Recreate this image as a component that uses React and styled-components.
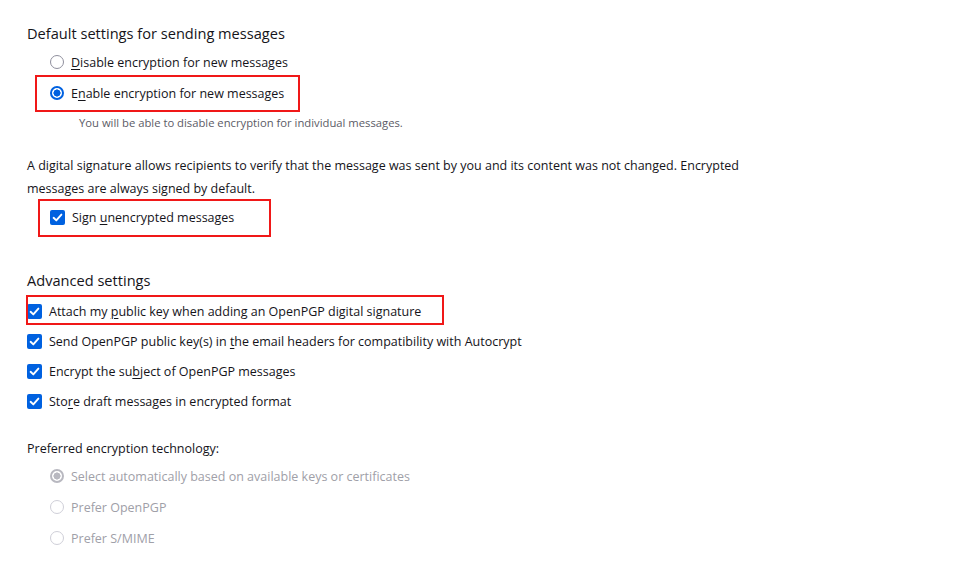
import React from "react";
import styled, { createGlobalStyle, css } from "styled-components";

const FS = "12.5px";

const Global = createGlobalStyle`
  html, body { margin: 0; padding: 0; background: #ffffff; }
  body {
    font-family: "Open Sans", "Noto Sans", "Liberation Sans", sans-serif;
    color: #15141a;
    -webkit-font-smoothing: antialiased;
  }
`;

const Page = styled.div`
  padding: 22px 0 0 27px;
  width: 930px;
  box-sizing: border-box;
`;

const Heading = styled.h2`
  margin: ${(p) => p.$mt || 0}px 0 0 0;
  font-size: 14.6px;
  line-height: 22px;
  font-weight: 400;
  color: #15141a;
`;

const Group = styled.div`
  display: flex;
  flex-direction: column;
  margin: ${(p) => p.$mt || 0}px 0 0 ${(p) => p.$indent || 0}px;
`;

const Row = styled.label`
  display: flex;
  align-items: center;
  height: ${(p) => p.$h || 30}px;
  font-size: ${FS};
  color: ${(p) => (p.$disabled ? "#a0a0a8" : "#15141a")};
  gap: 7px;
  align-self: flex-start;
  position: relative;
`;

const Mark = styled.span`
  position: absolute;
  pointer-events: none;
  border: 2px solid #f01818;
  top: ${(p) => p.$t}px;
  bottom: ${(p) => p.$b}px;
  left: ${(p) => p.$l}px;
  right: ${(p) => p.$r}px;
`;

const Radio = styled.span`
  width: 14px;
  height: 14px;
  border-radius: 50%;
  box-sizing: border-box;
  flex: none;
  border: 1px solid ${(p) => (p.$disabled ? "#cfcfd8" : "#8f8f9d")};
  background: #fff;
  ${(p) =>
    p.$checked &&
    css`
      border: 2px solid ${p.$disabled ? "#b8b8c0" : "#0061e0"};
      background: radial-gradient(
        circle,
        ${p.$disabled ? "#b8b8c0" : "#0061e0"} 0 3.3px,
        #fff 3.8px
      );
    `}
`;

const Box = styled.span`
  width: 15px;
  height: 15px;
  border-radius: 2px;
  background: #0061e0;
  flex: none;
  display: flex;
  align-items: center;
  justify-content: center;
`;

const U = styled.span`
  text-decoration: underline;
  text-underline-offset: 2px;
`;

const Note = styled.div`
  margin: 6px 0 0 52px;
  font-size: 11.25px;
  line-height: 16px;
  color: #5b5b66;
`;

const Para = styled.p`
  margin: 23px 0 0 0;
  font-size: ${FS};
  line-height: 23px;
  max-width: 740px;
`;

const Label = styled.div`
  margin-top: 24px;
  font-size: ${FS};
  line-height: 18px;
`;

const Check = () => (
  <Box>
    <svg width="11" height="11" viewBox="0 0 11 11">
      <path
        d="M1.6 5.8 L4.3 8.4 L9.4 2.6"
        fill="none"
        stroke="#fff"
        strokeWidth="1.9"
        strokeLinecap="round"
        strokeLinejoin="round"
      />
    </svg>
  </Box>
);

export default function App() {
  return (
    <>
      <Global />
      <Page>
        <Heading>Default settings for sending messages</Heading>
        <Group $indent={23} $mt={2.5}>
          <Row $h={31}>
            <Radio />
            <span>
              <U>D</U>isable encryption for new messages
            </span>
          </Row>
          <Row $h={31}>
            <Mark $t={-3} $b={-3} $l={-15} $r={-16} />
            <Radio $checked />
            <span>
              E<U>n</U>able encryption for new messages
            </span>
          </Row>
        </Group>
        <Note>You will be able to disable encryption for individual messages.</Note>
        <Para>
          A digital signature allows recipients to verify that the message was sent by you and its
          content was not changed. Encrypted messages are always signed by default.
        </Para>
        <Group $indent={23} $mt={2.5}>
          <Row>
            <Mark $t={-3} $b={-5} $l={-12} $r={-37} />
            <Check />
            <span>
              Sign <U>u</U>nencrypted messages
            </span>
          </Row>
        </Group>
        <Heading $mt={37}>Advanced settings</Heading>
        <Group $mt={5}>
          <Row>
            <Mark $t={-1} $b={1} $l={-1} $r={-23} />
            <Check />
            <span>
              Attach my <U>p</U>ublic key when adding an OpenPGP digital signature
            </span>
          </Row>
          <Row>
            <Check />
            <span>
              Send OpenPGP public key(s) in <U>t</U>he email headers for compatibility with
              Autocrypt
            </span>
          </Row>
          <Row>
            <Check />
            <span>
              Encrypt the su<U>b</U>ject of OpenPGP messages
            </span>
          </Row>
          <Row>
            <Check />
            <span>
              Sto<U>r</U>e draft messages in encrypted format
            </span>
          </Row>
        </Group>
        <Label>Preferred encryption technology:</Label>
        <Group $indent={23} $mt={2.5}>
          <Row $h={31} $disabled>
            <Radio $checked $disabled />
            <span>Select automatically based on available keys or certificates</span>
          </Row>
          <Row $h={31} $disabled>
            <Radio $disabled />
            <span>Prefer OpenPGP</span>
          </Row>
          <Row $h={31} $disabled>
            <Radio $disabled />
            <span>Prefer S/MIME</span>
          </Row>
        </Group>
      </Page>
    </>
  );
}
